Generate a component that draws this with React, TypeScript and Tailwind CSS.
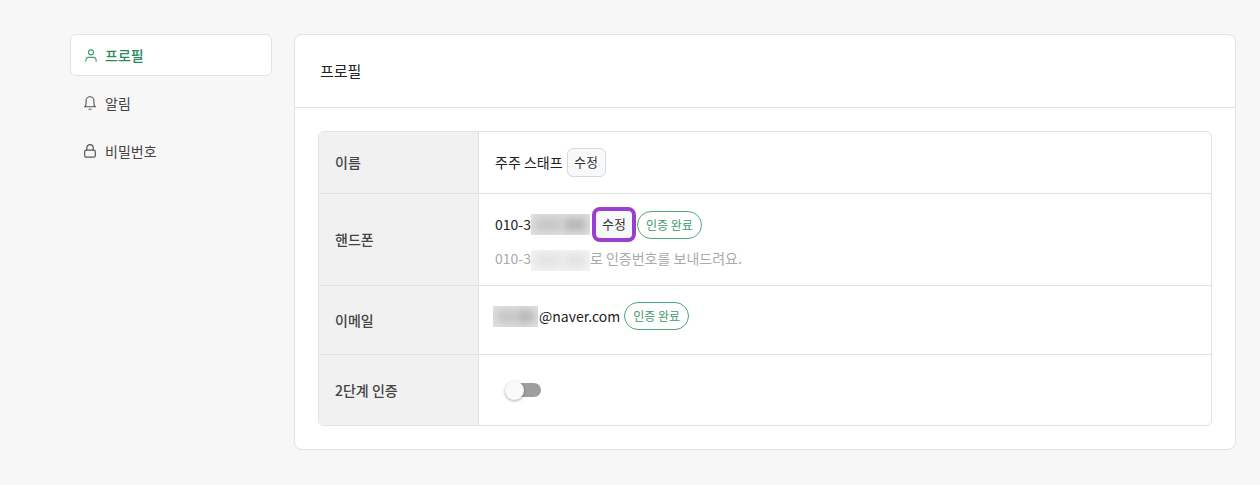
import { ReactNode } from 'react';

function UserIcon() {
  return (
    <svg className="shrink-0" width="12" height="13" viewBox="0 0 12 13" fill="none" stroke="#3f9c70" strokeWidth="1.1" strokeLinecap="round">
      <circle cx="6" cy="3.4" r="2.5" />
      <path d="M.8 12.2c0-2.6 1.3-3.8 2.8-3.8h4.8c1.5 0 2.8 1.2 2.8 3.8" />
    </svg>
  );
}

function BellIcon() {
  return (
    <svg className="shrink-0" width="12" height="14" viewBox="0 0 12 14" fill="none" stroke="#555" strokeWidth="1.1" strokeLinecap="round" strokeLinejoin="round">
      <path d="M.7 10.8c1-.8 1.4-1.6 1.4-3.2V4.6a3.9 3.9 0 0 1 7.8 0v3c0 1.6.4 2.4 1.4 3.2z" />
      <path d="M5 13.3h2" />
    </svg>
  );
}

function LockIcon() {
  return (
    <svg className="shrink-0" width="12" height="14" viewBox="0 0 12 14" fill="none" stroke="#555" strokeWidth="1.2" strokeLinejoin="round">
      <rect x=".7" y="6.2" width="10.6" height="7" rx="1.5" />
      <path d="M2.8 6.2V3.8a3.2 3.2 0 0 1 6.4 0v2.4" />
    </svg>
  );
}

function Blur({ width, light = false }: { width: string; light?: boolean }) {
  return (
    <span className={`flex h-[21px] shrink-0 overflow-hidden ${width} ${light ? 'bg-[#f3f3f3]' : 'bg-[#e0e0e0]'}`}>
      <span className={`my-auto ml-1 h-[13px] w-[42%] blur-[4px] ${light ? 'bg-[#e2e2e2]' : 'bg-[#c4c4c4]'}`} />
      <span className={`my-auto ml-auto mr-1 h-[13px] w-[38%] blur-[4px] ${light ? 'bg-[#e2e2e2]' : 'bg-[#b4b4b4]'}`} />
    </span>
  );
}

function EditButton({ focused = false }: { focused?: boolean }) {
  return (
    <button
      className={`flex items-center justify-center bg-[#f8f9fa] text-[13px] text-[#333] ${
        focused
          ? 'h-[35px] w-[44px] rounded-lg border-4 border-[#9a3fce]'
          : 'h-[29px] w-[39px] rounded-md border border-[#d8d8d8]'
      }`}
    >
      수정
    </button>
  );
}

function VerifiedBadge() {
  return (
    <span className="flex h-7 w-[65px] items-center justify-center rounded-full border border-[#4aa876] text-xs text-[#3d9a68]">
      인증 완료
    </span>
  );
}

function Row({ label, children, height, last = false }: { label: string; children: ReactNode; height: string; last?: boolean }) {
  return (
    <div className={`flex ${height} ${last ? '' : 'border-b border-[#e2e2e2]'}`}>
      <div className="flex w-[160px] shrink-0 items-center border-r border-[#e2e2e2] bg-[#f1f1f1] pb-[1px] pl-4 font-medium text-[#444]">
        {label}
      </div>
      <div className="grow px-4">{children}</div>
    </div>
  );
}

export default function App() {
  return (
    <div
      className="flex h-[485px] w-full items-start gap-[22px] bg-[#f7f7f7] pl-[70px] pr-6 pt-[34px] text-sm text-[#222]"
      style={{ fontFamily: '"Noto Sans CJK KR", "Noto Sans", sans-serif' }}
    >
      <nav className="flex w-[202px] shrink-0 flex-col gap-[6px]">
        <div className="flex h-[42px] items-center gap-[8px] rounded-md border border-[#e2e2e2] bg-white pl-[14px] font-medium text-[#2c8c5e]">
          <UserIcon />
          <span>프로필</span>
        </div>
        <div className="flex h-[42px] items-center gap-[9px] pl-[14px] text-[#444]">
          <BellIcon />
          알림
        </div>
        <div className="flex h-[42px] items-center gap-[9px] pl-[14px] text-[#444]">
          <LockIcon />
          비밀번호
        </div>
      </nav>
      <main className="h-[416px] grow rounded-lg border border-[#e2e2e2] bg-white">
        <div className="flex h-[73px] items-center border-b border-[#e2e2e2] pl-[25px] text-[15px]">프로필</div>
        <div className="p-[23px]">
          <div className="overflow-hidden rounded-md border border-[#e2e2e2]">
            <Row label="이름" height="h-[62px]">
              <div className="flex h-full items-center gap-1 pb-[1px]">
                주주 스태프
                <EditButton />
              </div>
            </Row>
            <Row label="핸드폰" height="h-[92px]">
              <div className="flex items-center pt-[13px]">
                <span className="mb-[2px]">010-3</span>
                <Blur width="w-[59px]" />
                <span className="ml-[2px]">
                  <EditButton focused />
                </span>
                <span className="ml-[1px]">
                  <VerifiedBadge />
                </span>
              </div>
              <div className="mt-[6px] flex items-start text-[#aaa]">
                010-3
                <span className="mt-[2px]">
                  <Blur width="w-[59px]" light />
                </span>
                로 인증번호를 보내드려요.
              </div>
            </Row>
            <Row label="이메일" height="h-[69px]">
              <div className="-ml-[2px] flex items-center gap-1 pt-[16px]">
                <span className="flex items-center">
                  <Blur width="w-[45px]" />
                  <span className="ml-[1px]">@naver.com</span>
                </span>
                <VerifiedBadge />
              </div>
            </Row>
            <Row label="2단계 인증" height="h-[70px]" last>
              <div className="flex h-full items-center pl-[12px]">
                <div className="relative h-[14px] w-[34px] rounded-full bg-[#9e9e9e]">
                  <span className="absolute -left-[2px] -top-[2px] h-[19px] w-[19px] rounded-full bg-[#fafafa] shadow-[0_1px_3px_rgba(0,0,0,0.35)]" />
                </div>
              </div>
            </Row>
          </div>
        </div>
      </main>
    </div>
  );
}
